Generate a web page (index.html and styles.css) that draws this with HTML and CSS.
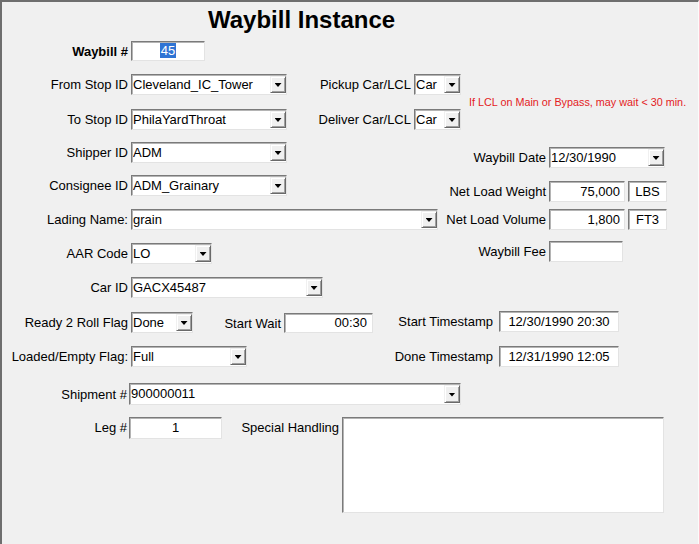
FILE: index.html
```html
<!DOCTYPE html>
<html lang="en">
<head>
    <meta charset="UTF-8">
    <title>Waybill Instance</title>
    <link rel="stylesheet" href="styles.css">
</head>
<body>
    <div class="form">
        <h1 class="title">Waybill Instance</h1>

        <div class="row r1">
            <div class="field">
                <span class="lbl lw126 bold">Waybill #</span>
                <div class="ctl h20 cw74 center"><span class="sel">45</span></div>
            </div>
        </div>

        <div class="row">
            <div class="field span290">
                <span class="lbl lw126">From Stop ID</span>
                <div class="ctl combo cw156"><span class="val">Cleveland_IC_Tower</span><span class="btn"></span></div>
            </div>
            <div class="field">
                <span class="lbl lw119">Pickup Car/LCL</span>
                <div class="ctl combo cw47"><span class="val">Car</span><span class="btn"></span></div>
            </div>
            <div class="note">If LCL on Main or Bypass, may wait &lt; 30 min.</div>
        </div>

        <div class="row gap14">
            <div class="field span290">
                <span class="lbl lw126">To Stop ID</span>
                <div class="ctl combo cw156"><span class="val">PhilaYardThroat</span><span class="btn"></span></div>
            </div>
            <div class="field">
                <span class="lbl lw119">Deliver Car/LCL</span>
                <div class="ctl combo cw47"><span class="val">Car</span><span class="btn"></span></div>
            </div>
        </div>

        <div class="row gap12">
            <div class="field span440">
                <span class="lbl lw126">Shipper ID</span>
                <div class="ctl combo cw156"><span class="val">ADM</span><span class="btn"></span></div>
            </div>
            <div class="field down5">
                <span class="lbl lw104">Waybill Date</span>
                <div class="ctl combo cw116"><span class="val">12/30/1990</span><span class="btn"></span></div>
            </div>
        </div>

        <div class="row gap12">
            <div class="field span440">
                <span class="lbl lw126">Consignee ID</span>
                <div class="ctl combo cw156"><span class="val">ADM_Grainary</span><span class="btn"></span></div>
            </div>
            <div class="field down6">
                <span class="lbl lw104">Net Load Weight</span>
                <div class="ctl cw76 num">75,000</div>
                <div class="ctl cw39 center unit">LBS</div>
            </div>
        </div>

        <div class="row">
            <div class="field span440">
                <span class="lbl lw126">Lading Name:</span>
                <div class="ctl combo cw307"><span class="val">grain</span><span class="btn"></span></div>
            </div>
            <div class="field">
                <span class="lbl lw104">Net Load Volume</span>
                <div class="ctl cw76 num">1,800</div>
                <div class="ctl cw39 center unit">FT3</div>
            </div>
        </div>

        <div class="row">
            <div class="field span440">
                <span class="lbl lw126">AAR Code</span>
                <div class="ctl combo cw81"><span class="val">LO</span><span class="btn"></span></div>
            </div>
            <div class="field up2">
                <span class="lbl lw104">Waybill Fee</span>
                <div class="ctl cw74"></div>
            </div>
        </div>

        <div class="row">
            <div class="field">
                <span class="lbl lw126">Car ID</span>
                <div class="ctl combo cw192"><span class="val">GACX45487</span><span class="btn"></span></div>
            </div>
        </div>

        <div class="row gap14">
            <div class="field">
                <span class="lbl lw126">Ready 2 Roll Flag</span>
                <div class="ctl combo cw62"><span class="val">Done</span><span class="btn"></span></div>
            </div>
            <div class="field down1">
                <span class="lbl lw88">Start Wait</span>
                <div class="ctl h20 cw89 num wait">00:30</div>
            </div>
            <div class="field up1">
                <span class="lbl lw120 wide">Start Timestamp</span>
                <div class="ctl cw120 center">12/30/1990 20:30</div>
            </div>
        </div>

        <div class="row">
            <div class="field">
                <span class="lbl lw126">Loaded/Empty Flag:</span>
                <div class="ctl combo cw116"><span class="val">Full</span><span class="btn"></span></div>
            </div>
            <div class="field">
                <span class="lbl lw246 wide">Done Timestamp</span>
                <div class="ctl cw120 center">12/31/1990 12:05</div>
            </div>
        </div>

        <div class="row gap16 h22row">
            <div class="field">
                <span class="lbl lw125 tight">Shipment #</span>
                <div class="ctl h22 combo cw332"><span class="val">900000011</span><span class="btn"></span></div>
            </div>
        </div>

        <div class="row gap12 h22row">
            <div class="field top">
                <span class="lbl lw125 tight">Leg #</span>
                <div class="ctl h22 cw93 center">1</div>
            </div>
            <div class="field top">
                <span class="lbl lw117">Special Handling</span>
                <div class="ctl memo"></div>
            </div>
        </div>
    </div>
</body>
</html>
```

FILE: styles.css
```css
body {
    margin: 0;
    background: #f0f0f0;
    font-family: "Liberation Sans", Arial, sans-serif;
    font-size: 13px;
    color: #000;
}
.form {
    width: 699px;
    height: 544px;
    box-sizing: border-box;
    background: #f0f0f0;
    border-top: 2px solid #6e6e6e;
    border-left: 2px solid #6e6e6e;
    border-right: 1px solid #fbfbfb;
    overflow: hidden;
}
.title {
    margin: 6px 0 0 206px;
    font-size: 24px;
    line-height: 24px;
    font-weight: bold;
}

/* rows */
.row {
    display: flex;
    align-items: flex-start;
    height: 21px;
    margin-top: 13px;
}
.r1 {
    height: 20px;
    margin-top: 9px;
}
.gap12 { margin-top: 12px; }
.gap14 { margin-top: 14px; }
.gap16 { margin-top: 16px; }
.h22row { height: 22px; }

.field {
    display: flex;
    align-items: center;
    flex: none;
}
.field.top { align-items: flex-start; }
.down1 { margin-top: 1px; }
.down5 { margin-top: 5px; }
.down6 { margin-top: 6px; }
.up1 { margin-top: -1px; }
.up2 { margin-top: -2px; }
.span290 { width: 290px; }
.span440 { width: 440px; }

/* labels */
.lbl {
    flex: none;
    text-align: right;
    white-space: nowrap;
    margin-right: 3px;
}
.field.top .lbl { line-height: 22px; }
.lbl.wide { margin-right: 6px; }
.lbl.tight { margin-right: 2px; }
.bold { font-weight: bold; }
.lw88 { width: 88px; }
.lw104 { width: 104px; }
.lw117 { width: 117px; }
.lw119 { width: 119px; }
.lw120 { width: 120px; }
.lw125 { width: 125px; }
.lw126 { width: 126px; }
.lw246 { width: 246px; }

/* controls */
.ctl {
    flex: none;
    box-sizing: border-box;
    height: 21px;
    padding: 1px;
    line-height: 17px;
    background: #fff;
    border: 1px solid;
    border-color: #7a7a7a #e3e3e3 #e3e3e3 #7a7a7a;
    box-shadow: inset 1px 1px 0 #b4b4b4;
    white-space: nowrap;
    overflow: hidden;
}
.h20 { height: 20px; line-height: 16px; }
.h22 { height: 22px; line-height: 18px; }
.center { text-align: center; }
.num { text-align: right; padding-right: 4px; }
.wait { padding-right: 5px; }
.unit { margin-left: 3px; }
.cw39 { width: 39px; }
.cw47 { width: 47px; }
.cw62 { width: 62px; }
.cw74 { width: 74px; }
.cw76 { width: 76px; }
.cw81 { width: 81px; }
.cw89 { width: 89px; }
.cw93 { width: 93px; }
.cw116 { width: 116px; }
.cw120 { width: 120px; }
.cw156 { width: 156px; }
.cw192 { width: 192px; }
.cw307 { width: 307px; }
.cw332 { width: 332px; }

.sel {
    display: inline-block;
    line-height: 15px;
    padding: 0 1px;
    background: #2f74d4;
    color: #fff;
}

.combo {
    display: flex;
    padding-right: 0;
}
.combo .val {
    flex: 1;
    overflow: hidden;
}
.combo .btn {
    flex: none;
    box-sizing: border-box;
    width: 16px;
    height: 100%;
    display: flex;
    align-items: center;
    justify-content: center;
    background: #f0f0f0;
    border: 1px solid;
    border-color: #f0f0f0 #696969 #696969 #f0f0f0;
    box-shadow: inset 1px 1px 0 #fff, inset -1px -1px 0 #a0a0a0;
}
.combo .btn::after {
    content: "";
    width: 7px;
    height: 4px;
    margin-top: 1px;
    background: #000;
    clip-path: polygon(0 0, 100% 0, 50% 100%);
}

.memo {
    width: 322px;
    height: 96px;
}

.note {
    flex: none;
    margin: 22px 0 0 8px;
    font-size: 10.8px;
    line-height: 12px;
    color: #e41b23;
    white-space: nowrap;
}
```
